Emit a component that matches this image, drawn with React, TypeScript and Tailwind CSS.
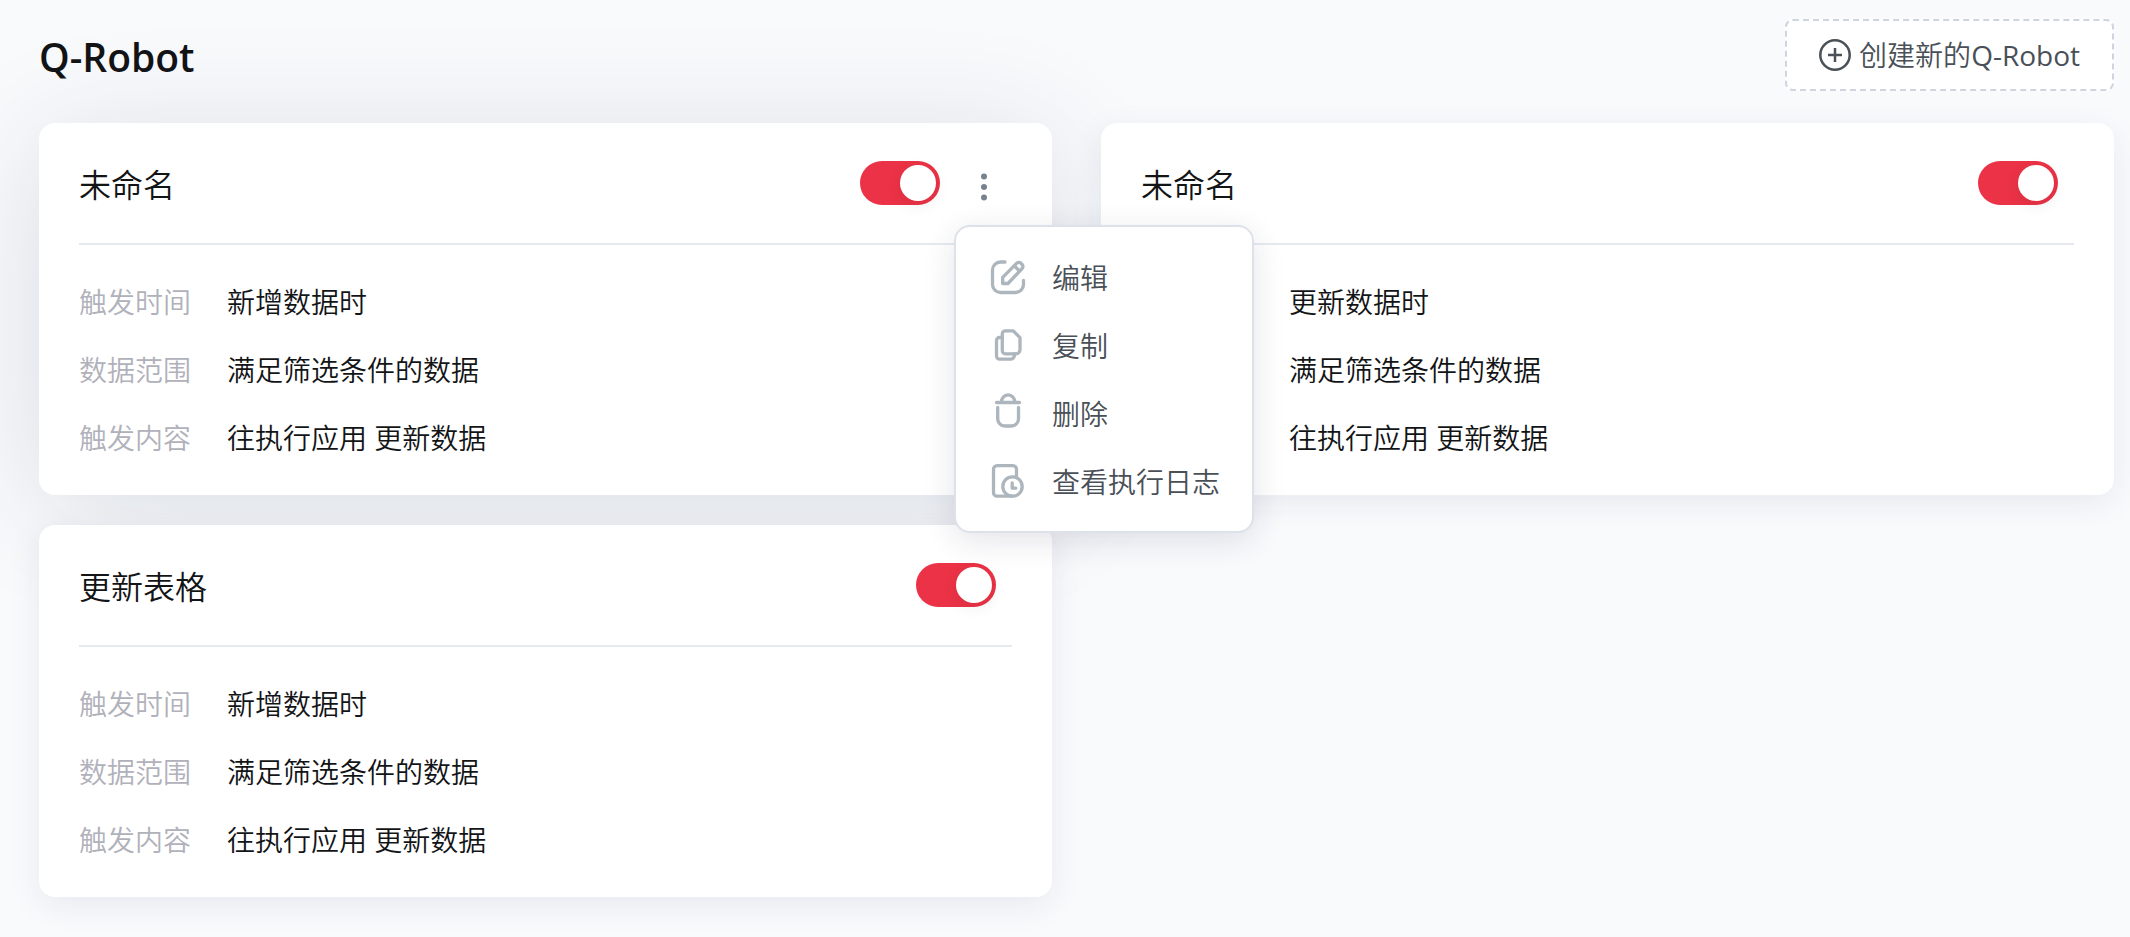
import React, { useState } from "react";

type Robot = {
  id: number;
  name: string;
  trigger: string;
  scope: string;
  action: string;
};

const robots: Robot[] = [
  { id: 1, name: "未命名", trigger: "新增数据时", scope: "满足筛选条件的数据", action: "往执行应用 更新数据" },
  { id: 2, name: "未命名", trigger: "更新数据时", scope: "满足筛选条件的数据", action: "往执行应用 更新数据" },
  { id: 3, name: "更新表格", trigger: "新增数据时", scope: "满足筛选条件的数据", action: "往执行应用 更新数据" },
];

const iconProps = {
  width: 40,
  height: 40,
  viewBox: "0 0 40 40",
  fill: "none",
  stroke: "currentColor",
  strokeWidth: 3.3,
  strokeLinecap: "round",
  strokeLinejoin: "round",
  "aria-hidden": true,
} as const;

function EditIcon() {
  return (
    <svg {...iconProps}>
      <path d="M17 5h-4.500a8 8 0 0 0-8 8v14.500a8 8 0 0 0 8 8h15a8 8 0 0 0 8-8V23.500" />
      <path d="M14.700 26.500v-6.200L28.800 6.200a2.800 2.800 0 0 1 4 0l1.300 1.300a2.800 2.800 0 0 1 0 4L20 26.500z" />
      <path d="M26.500 9l4.500 4.500" />
    </svg>
  );
}

function CopyIcon() {
  return (
    <svg {...iconProps}>
      <path d="M17 5.800h8.200l6.800 6.800v12.200a4 4 0 0 1-4 4H17.300a3 3 0 0 1-3-3V8.800a3 3 0 0 1 3-3z" />
      <path d="M13.500 12.500h-2a3 3 0 0 0-3 3v15.500a3.200 3.200 0 0 0 3.200 3.200H22.500a4 4 0 0 0 4-4v-1.500" />
    </svg>
  );
}

function TrashIcon() {
  return (
    <svg {...iconProps}>
      <path d="M8.500 9.500h23" />
      <path d="M13.500 9a6.600 7.200 0 0 1 13.200 0" />
      <path d="M9.700 14.500v11.500a7 7 0 0 0 7 7h6.800a7 7 0 0 0 7-7V14.500" />
    </svg>
  );
}

function LogIcon() {
  return (
    <svg {...iconProps}>
      <path d="M28.500 14.500V8.200a3.500 3.500 0 0 0-3.500-3.500H9A3.500 3.500 0 0 0 5.500 8.200v23.500a3.500 3.500 0 0 0 3.500 3.500h15" />
      <circle cx="24.500" cy="25.500" r="9.700" />
      <path d="M24.200 22v5.200h3.600" />
    </svg>
  );
}

const menuItems = [
  { label: "编辑", icon: EditIcon },
  { label: "复制", icon: CopyIcon },
  { label: "删除", icon: TrashIcon },
  { label: "查看执行日志", icon: LogIcon },
];

function RobotMenu() {
  return (
    <div
      role="menu"
      className="absolute top-[70px] -left-0.5 z-20 w-[300px] rounded-2xl border-2 border-[#dce1ea] bg-white py-4 shadow-[0_8px_32px_rgba(30,35,70,0.12)]"
    >
      {menuItems.map(({ label, icon: Icon }) => (
        <button
          key={label}
          role="menuitem"
          type="button"
          className="flex h-[68px] w-full items-center gap-6 px-8 text-left text-[28px] font-[350] whitespace-nowrap text-[#495057]"
        >
          <span className="text-[#adb5bd]">
            <Icon />
          </span>
          <span className="pt-0.5">{label}</span>
        </button>
      ))}
    </div>
  );
}

function RobotCard({ robot, active, menuOpen, onToggleMenu }: {
  robot: Robot;
  active: boolean;
  menuOpen: boolean;
  onToggleMenu: () => void;
}) {
  const rows = [
    { label: "触发时间", value: robot.trigger },
    { label: "数据范围", value: robot.scope },
    { label: "触发内容", value: robot.action },
  ];

  return (
    <article
      className={`rounded-2xl bg-white px-10 pb-[39px] ${
        active ? "shadow-[0_16px_120px_rgba(20,40,80,0.14)]" : "shadow-[0_8px_32px_rgba(30,40,90,0.08)]"
      }`}
    >
      <header className="flex h-[122px] items-center justify-between border-b-2 border-[#e6eaf0]">
        <h2 className="pt-1 text-[32px] font-[350] text-[#121416]">{robot.name}</h2>
        <div className="flex items-center">
          <input
            type="checkbox"
            role="switch"
            defaultChecked
            aria-label={`启用 ${robot.name}`}
            className="mr-4 h-11 w-20 cursor-pointer appearance-none rounded-full bg-[#ced4da] p-1 before:block before:size-9 before:rounded-full before:bg-white before:shadow-[0_4px_16px_rgba(0,0,0,0.08)] checked:bg-[#eb3246] checked:before:translate-x-9"
          />
          {active && (
            // the menu sits above the neighbouring card
            <div className="relative">
              <button
                type="button"
                aria-label="更多操作"
                aria-expanded={menuOpen}
                onClick={onToggleMenu}
                className="flex h-14 w-14 items-center justify-center text-[#78828c]"
              >
                <svg width="8" height="38" viewBox="0 0 8 38" fill="currentColor" aria-hidden="true">
                  <circle cx="4" cy="12.500" r="3" />
                  <circle cx="4" cy="23" r="3" />
                  <circle cx="4" cy="33.500" r="3" />
                </svg>
              </button>
              {menuOpen && <RobotMenu />}
            </div>
          )}
        </div>
      </header>

      <dl className="flex flex-col gap-8 pt-[39px] text-[28px] leading-9 font-[350]">
        {rows.map((row) => (
          <div key={row.label} className="flex gap-9">
            <dt className="text-[#b0b1ba]">{row.label}</dt>
            <dd className="text-[#121416]">{row.value}</dd>
          </div>
        ))}
      </dl>
    </article>
  );
}

export default function App() {
  const [menuOpen, setMenuOpen] = useState(true);

  return (
    <main className="min-h-screen overflow-hidden bg-[#f9fafc] pt-[19px] pr-4 pb-10 pl-[39px] font-['Open_Sans','Noto_Sans_CJK_SC',sans-serif]">
      <div className="mb-8 flex items-center justify-between">
        <h1 className="pt-1 text-[39px] leading-[48px] font-semibold text-[#121416]">Q-Robot</h1>
        <button
          type="button"
          className="flex h-[72px] items-center gap-2 rounded-lg border-2 border-dashed border-[#ced4e0] bg-white px-8 text-[28px] font-[350] text-[#495057]"
        >
          <svg width="32" height="32" viewBox="0 0 32 32" fill="none" stroke="currentColor" strokeWidth="2.500" aria-hidden="true">
            <circle cx="16" cy="16" r="14.700" />
            <path d="M16 9v14M9 16h14" />
          </svg>
          <span>
            创建新的<span className="font-normal">Q-Robot</span>
          </span>
        </button>
      </div>

      <div className="grid grid-cols-2 gap-x-[49px] gap-y-[30px]">
        {robots.map((robot, index) => (
          <RobotCard
            key={robot.id}
            robot={robot}
            active={index === 0}
            menuOpen={menuOpen}
            onToggleMenu={() => setMenuOpen(!menuOpen)}
          />
        ))}
      </div>
    </main>
  );
}
